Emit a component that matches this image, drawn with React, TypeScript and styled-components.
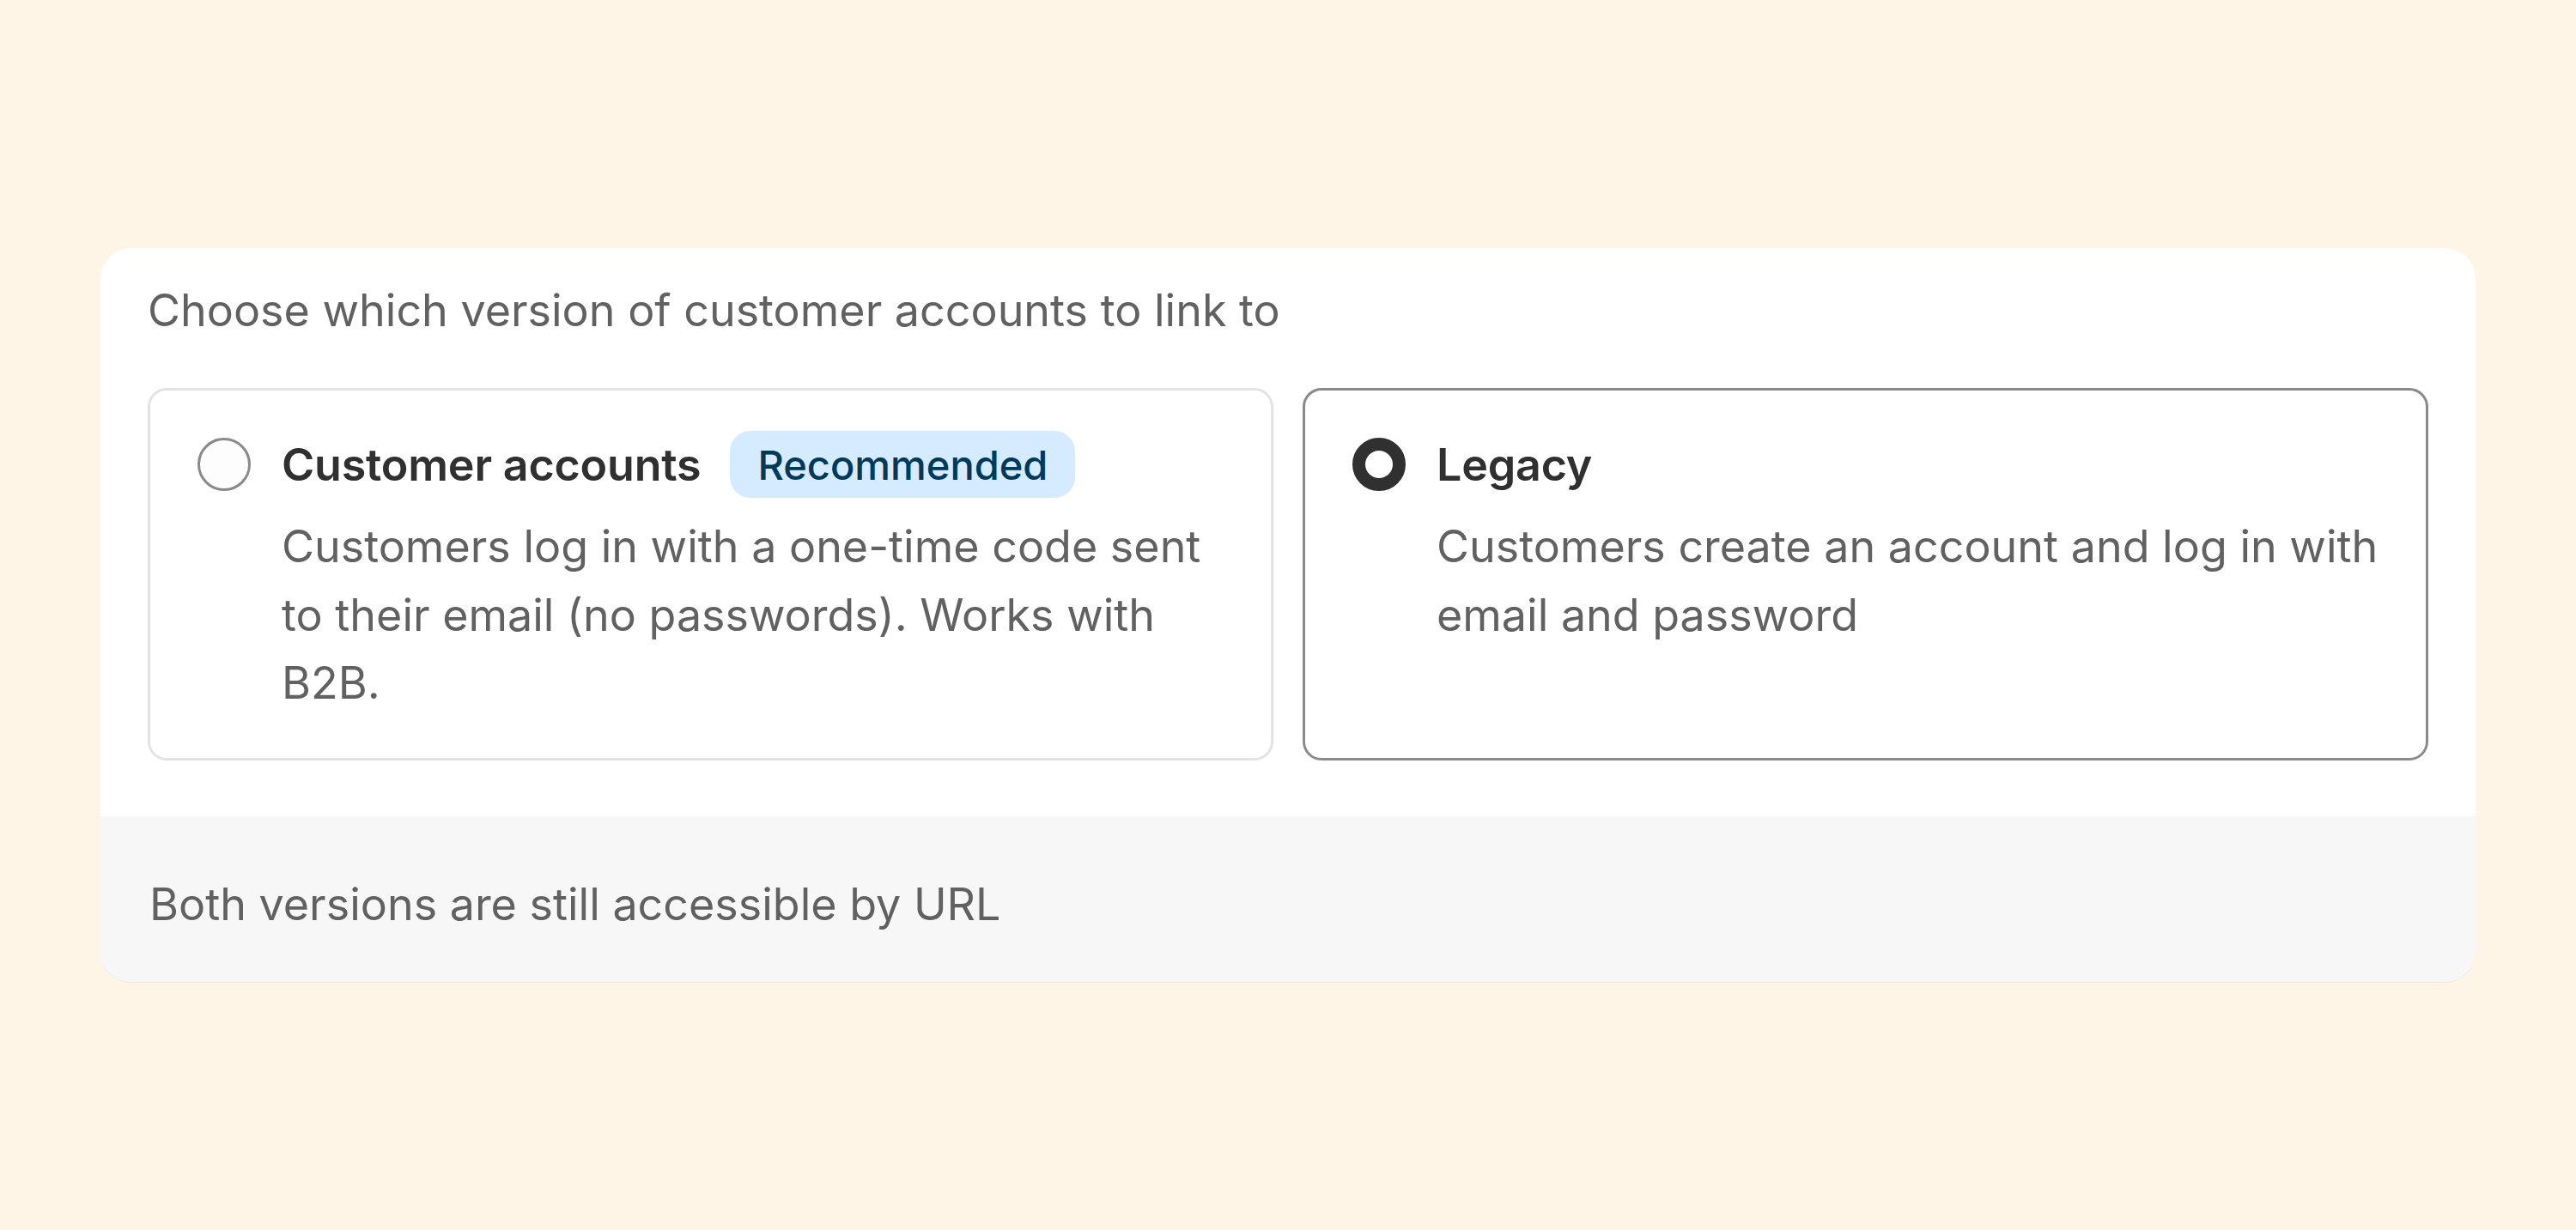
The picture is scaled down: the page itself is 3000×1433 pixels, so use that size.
import React from "react";
import styled, { createGlobalStyle } from "styled-components";

const GlobalStyle = createGlobalStyle`
  html, body {
    margin: 0;
    padding: 0;
    background: #fff5e6;
  }
  body {
    font-family: Inter, "Noto Sans", "Liberation Sans", sans-serif;
  }
`;

const Page = styled.div`
  width: 3000px;
  height: 1433px;
  display: flex;
  align-items: center;
  justify-content: center;
  box-sizing: border-box;
  background: #fff5e6;
`;

const Card = styled.section`
  width: 2766px;
  background: #ffffff;
  border-radius: 36px;
  overflow: hidden;
  box-shadow: 0 1px 0 rgba(0, 0, 0, 0.06);
`;

const Body = styled.div`
  padding: 37px 55px 65px;
  display: flex;
  flex-direction: column;
  gap: 54px;
`;

const Heading = styled.div`
  font-size: 52px;
  line-height: 72px;
  color: #616161;
`;

const Options = styled.div`
  display: grid;
  grid-template-columns: 1fr 1fr;
  gap: 34px;
`;

const Option = styled.label<{ $selected?: boolean }>`
  display: flex;
  flex-direction: column;
  gap: 16px;
  padding: 46px 55px 47px;
  border: 3px solid ${(p) => (p.$selected ? "#8a8a8a" : "#e3e3e3")};
  border-radius: 22px;
  background: #ffffff;
  cursor: pointer;
`;

const OptionHead = styled.div`
  display: flex;
  align-items: center;
  height: 80px;
`;

const Radio = styled.span<{ $checked?: boolean }>`
  flex: none;
  width: 62px;
  height: 62px;
  box-sizing: border-box;
  border-radius: 50%;
  margin-right: 36px;
  background: ${(p) => (p.$checked ? "#ffffff" : "#fdfdfd")};
  border: ${(p) => (p.$checked ? "15px solid #303030" : "3px solid #8a8a8a")};
`;

const OptionTitle = styled.span`
  font-size: 52px;
  font-weight: 600;
  color: #303030;
  letter-spacing: -0.2px;
`;

const Badge = styled.span`
  margin-left: 34px;
  height: 78px;
  display: inline-flex;
  align-items: center;
  padding: 0 32px;
  border-radius: 24px;
  background: #d5ebff;
  color: #003a5a;
  font-size: 47px;
  font-weight: 500;
`;

const Description = styled.p`
  margin: 0 0 0 98px;
  font-size: 52px;
  line-height: 79.5px;
  color: #616161;
`;

const Footer = styled.div`
  background: #f7f7f7;
  padding: 67px 57px 54px;
  font-size: 52px;
  line-height: 72px;
  color: #616161;
`;

const options = [
  {
    id: "new",
    title: "Customer accounts",
    badge: "Recommended",
    description:
      "Customers log in with a one-time code sent to their email (no passwords). Works with B2B.",
    selected: false,
  },
  {
    id: "legacy",
    title: "Legacy",
    badge: null,
    description: "Customers create an account and log in with email and password",
    selected: true,
  },
];

export default function App() {
  return (
    <>
      <GlobalStyle />
      <Page>
        <Card>
          <Body>
            <Heading>Choose which version of customer accounts to link to</Heading>
            <Options>
              {options.map((o) => (
                <Option key={o.id} $selected={o.selected}>
                  <OptionHead>
                    <Radio $checked={o.selected} />
                    <OptionTitle>{o.title}</OptionTitle>
                    {o.badge && <Badge>{o.badge}</Badge>}
                  </OptionHead>
                  <Description>{o.description}</Description>
                </Option>
              ))}
            </Options>
          </Body>
          <Footer>Both versions are still accessible by URL</Footer>
        </Card>
      </Page>
    </>
  );
}
